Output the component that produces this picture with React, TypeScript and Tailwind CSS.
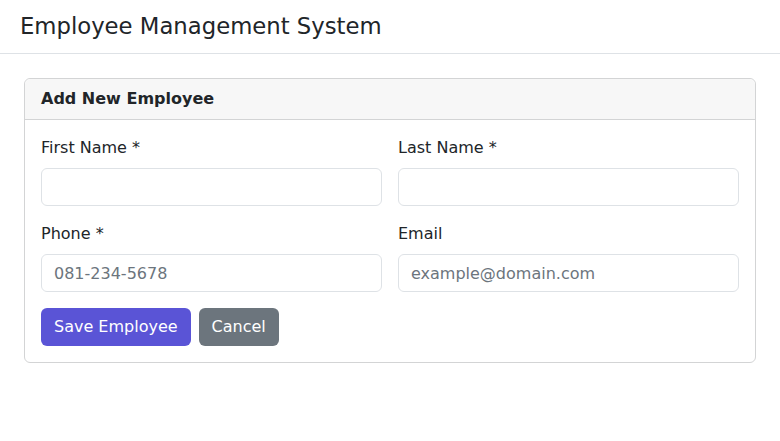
export default function App() {
  return (
    <div className="min-h-screen bg-white text-[#212529] font-['DejaVu_Sans',sans-serif]">
      <header className="flex h-[54px] items-center border-b border-[#dee2e6] px-5">
        <h1 className="text-[22.74px] leading-[1.2] font-normal">Employee Management System</h1>
      </header>

      <main className="px-6 pt-6">
        <div className="rounded-md border border-[#d3d4d5] bg-white">
          <div className="rounded-t-md border-b border-[#d3d4d5] bg-[#f7f7f7] px-4 py-2">
            <h2 className="text-base leading-6 font-bold">Add New Employee</h2>
          </div>

          <form className="p-4" onSubmit={(e) => e.preventDefault()}>
            <div className="grid grid-cols-2 gap-x-4 gap-y-4">
              <Field label="First Name *" />
              <Field label="Last Name *" />
              <Field label="Phone *" placeholder="081-234-5678" />
              <Field label="Email" placeholder="example@domain.com" type="email" />
            </div>

            <div className="mt-4 flex gap-2">
              <button
                type="submit"
                className="h-[38px] rounded-md bg-[#5a54d6] px-[13px] text-base text-white"
              >
                Save Employee
              </button>
              <button
                type="button"
                className="h-[38px] rounded-md bg-[#6c757d] px-[13px] text-base text-white"
              >
                Cancel
              </button>
            </div>
          </form>
        </div>
      </main>
    </div>
  );
}

function Field({ label, placeholder, type = 'text' }: { label: string; placeholder?: string; type?: string }) {
  return (
    <div>
      <label className="mb-2 block text-base leading-6">{label}</label>
      <input
        type={type}
        placeholder={placeholder}
        className="block h-[38px] w-full rounded-md border border-[#dee2e6] px-3 text-base text-[#212529] outline-none placeholder:text-[#6c757d]"
      />
    </div>
  );
}
